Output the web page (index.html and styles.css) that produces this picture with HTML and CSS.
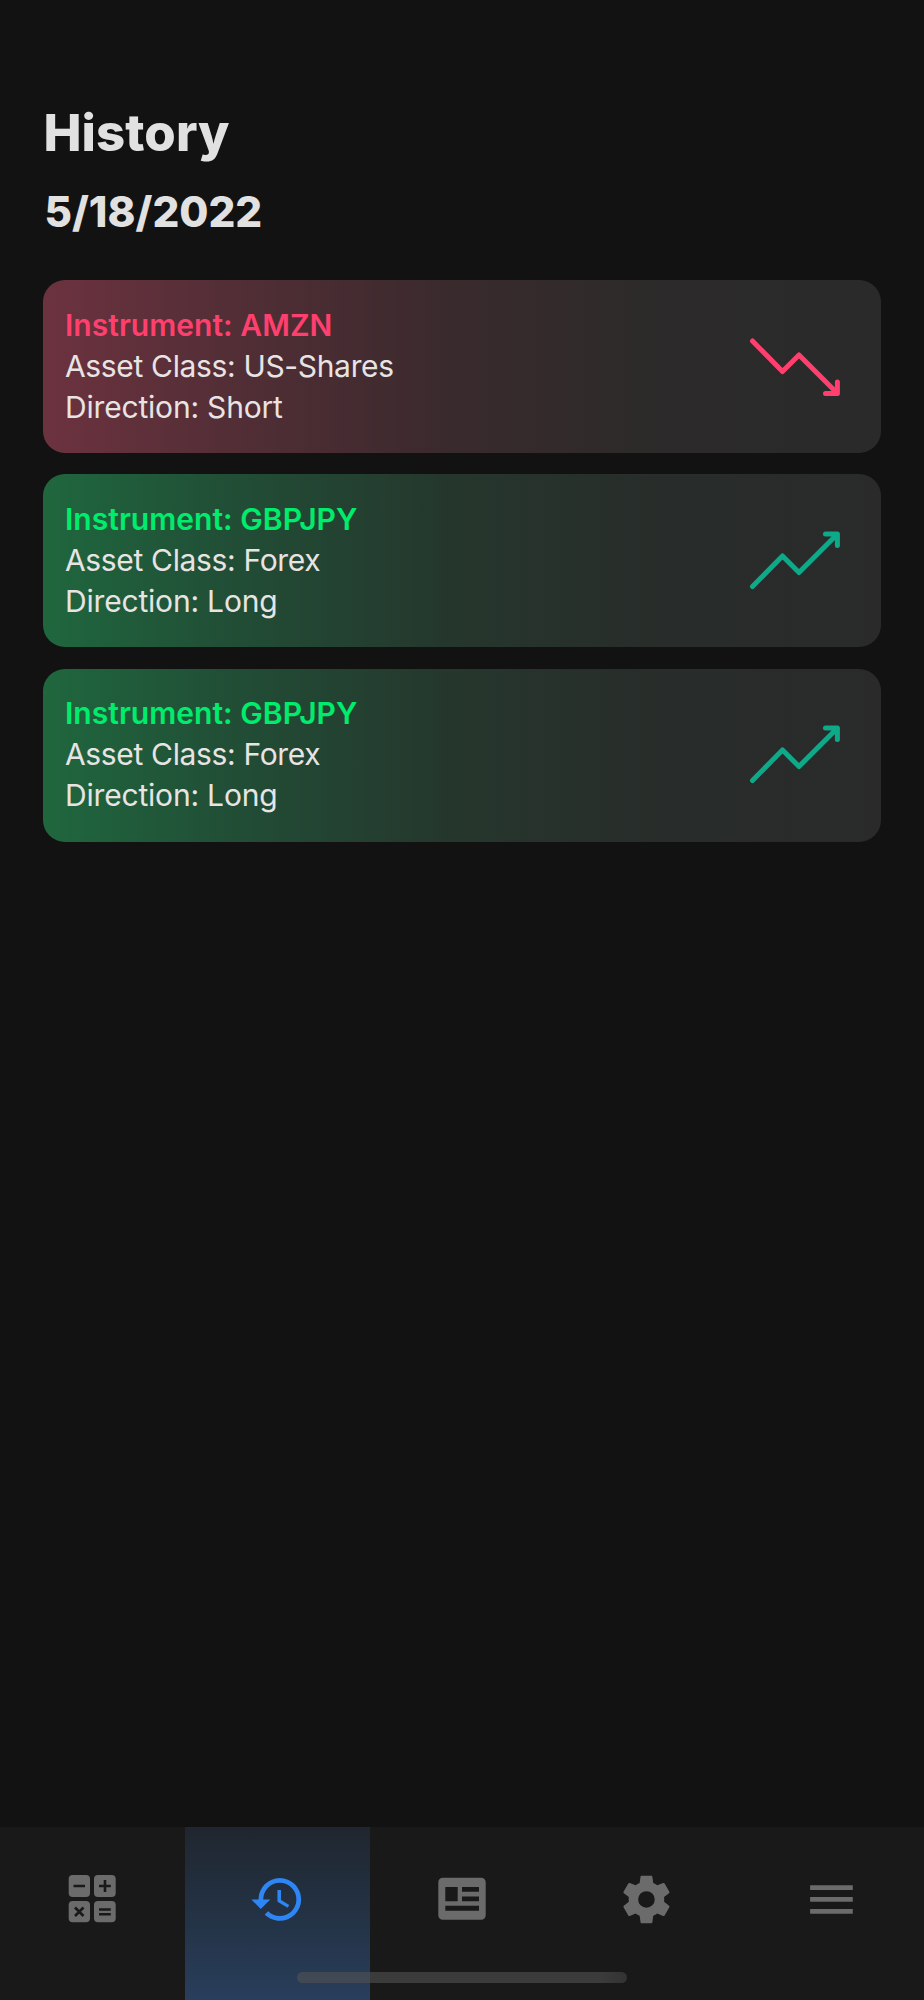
FILE: index.html
```html
<!DOCTYPE html>
<html lang="en">
<head>
<meta charset="utf-8">
<title>History</title>
<link rel="stylesheet" href="styles.css">
</head>
<body>
<div class="screen">
  <main class="content">
    <h1 class="title">History</h1>
    <h2 class="date">5/18/2022</h2>
    <section class="cards">
      <article class="card card-short">
        <div class="info">
          <p class="instrument">Instrument: AMZN</p>
          <p class="asset">Asset Class: US-Shares</p>
          <p class="direction">Direction: Short</p>
        </div>
        <svg class="trend" viewBox="0 0 96 64"><path d="M5.5 5 35.5 35.5 52 19 89 56M78.5 57.5H90.4V46"/></svg>
      </article>
      <article class="card card-long">
        <div class="info">
          <p class="instrument">Instrument: GBPJPY</p>
          <p class="asset">Asset Class: Forex</p>
          <p class="direction">Direction: Long</p>
        </div>
        <svg class="trend" viewBox="0 0 96 64"><path d="M5.5 56.5 35.5 26 52 42.500 89 5.5M78.5 4H90.4V15.5"/></svg>
      </article>
      <article class="card card-long">
        <div class="info">
          <p class="instrument">Instrument: GBPJPY</p>
          <p class="asset">Asset Class: Forex</p>
          <p class="direction">Direction: Long</p>
        </div>
        <svg class="trend" viewBox="0 0 96 64"><path d="M5.5 56.5 35.5 26 52 42.500 89 5.5M78.5 4H90.4V15.5"/></svg>
      </article>
    </section>
  </main>
  <nav class="tabs">
    <a class="tab">
      <svg class="custom" viewBox="0 0 64 64">
        <rect x="8.7" y="10" width="21.3" height="22" rx="4"/><rect x="34" y="10" width="21.7" height="22" rx="4"/>
        <rect x="8.7" y="36" width="21.3" height="21.3" rx="4"/><rect x="34" y="36" width="21.7" height="21.3" rx="4"/>
        <path class="marks" d="M13.5 21H25M39 21H50.8M45 15V27M15 42.5 23.5 51M23.5 42.5 15 51M39 44.5H50.8M39 49.2H50.8"/>
      </svg>
    </a>
    <a class="tab active">
      <svg class="icon" viewBox="0 0 24 24"><path d="M13.5 8H12V13L16.28 15.54 17 14.33 13.5 12.25V8M13 3A9 9 0 0 0 4 12H1L4.96 16.03 9 12H6A7 7 0 0 1 13 5 7 7 0 0 1 20 12 7 7 0 0 1 13 19C11.07 19 9.32 18.21 8.06 16.94L6.64 18.36C8.27 20 10.5 21 13 21A9 9 0 0 0 22 12 9 9 0 0 0 13 3"/></svg>
    </a>
    <a class="tab">
      <svg class="custom" viewBox="0 0 64 64"><path fill-rule="evenodd" d="M12.8 12.7H51.2A4.5 4.5 0 0 1 55.7 17.2V50.2A4.5 4.5 0 0 1 51.2 54.7H12.8A4.5 4.5 0 0 1 8.3 50.2V17.2A4.5 4.5 0 0 1 12.8 12.7ZM15.3 22V36.3H27.7V22ZM32 22V26.8H49V22ZM32 31.4V36.3H49V31.4ZM15.3 40.8V45.7H49V40.8Z"/></svg>
    </a>
    <a class="tab">
      <svg class="icon" viewBox="0 0 24 24"><path d="M12,15.5A3.5,3.5 0 0,1 8.5,12A3.5,3.5 0 0,1 12,8.5A3.5,3.5 0 0,1 15.5,12A3.5,3.5 0 0,1 12,15.5M19.43,12.97C19.47,12.65 19.5,12.33 19.5,12C19.5,11.67 19.47,11.34 19.43,11L21.54,9.37C21.73,9.22 21.78,8.95 21.66,8.73L19.66,5.27C19.54,5.05 19.27,4.96 19.05,5.05L16.56,6.05C16.04,5.66 15.5,5.32 14.87,5.07L14.5,2.42C14.46,2.18 14.25,2 14,2H10C9.75,2 9.54,2.18 9.5,2.42L9.13,5.07C8.5,5.32 7.96,5.66 7.44,6.05L4.95,5.05C4.73,4.96 4.46,5.05 4.34,5.27L2.34,8.73C2.21,8.95 2.27,9.22 2.46,9.37L4.57,11C4.53,11.34 4.5,11.67 4.5,12C4.5,12.33 4.53,12.65 4.57,12.97L2.46,14.63C2.27,14.78 2.21,15.05 2.34,15.27L4.34,18.73C4.46,18.95 4.73,19.03 4.95,18.95L7.44,17.94C7.96,18.34 8.5,18.68 9.13,18.93L9.5,21.58C9.54,21.82 9.75,22 10,22H14C14.25,22 14.46,21.82 14.5,21.58L14.87,18.93C15.5,18.67 16.04,18.34 16.56,17.94L19.05,18.95C19.27,19.03 19.54,18.95 19.66,18.73L21.66,15.27C21.78,15.05 21.73,14.78 21.54,14.63L19.43,12.97Z"/></svg>
    </a>
    <a class="tab">
      <svg class="icon" viewBox="0 0 24 24"><path d="M3 6H21V8H3ZM3 11H21V13H3ZM3 16H21V18H3Z"/></svg>
    </a>
    <div class="home-indicator"></div>
  </nav>
</div>
</body>
</html>
```
FILE: styles.css
```css
* { box-sizing: border-box; }
body { margin: 0; background: #121212; font-family: Inter, "Liberation Sans", sans-serif; }
h1, h2, p { margin: 0; white-space: nowrap; }
.screen { width: 924px; height: 2000px; display: flex; flex-direction: column; background: #121212; }
.content { flex: 1; padding: 103px 43px 0; color: #e1e1e1; }
.title { font-size: 50.8px; line-height: 60px; font-weight: 800; letter-spacing: .1px; margin-left: .5px; }
.date { font-size: 42.2px; line-height: 50px; font-weight: 800; margin-top: 24px; margin-left: 1.5px; }
.cards { display: flex; flex-direction: column; gap: 21.6px; margin-top: 43px; }
.card { display: flex; justify-content: space-between; align-items: flex-start; height: 172.8px; border-radius: 22px; padding: 24.5px 38px 0 22px; }
.card-short { background: linear-gradient(90deg, #6c323f 0%, #532e36 22%, #3a2a2d 48%, #2d2a2a 72%, #2a2a2a 100%); }
.card-long { background: linear-gradient(90deg, #1f673e 0%, #214e36 22%, #25372d 48%, #282d2a 72%, #2a2a2a 100%); }
.info { font-size: 30px; line-height: 41px; color: #e8e4e4; }
.instrument { font-weight: 600; letter-spacing: .04px; }
.asset { letter-spacing: -.34px; }
.direction { letter-spacing: -.19px; }
.card-short .instrument { color: #ff3f6d; }
.card-long .instrument { color: #00ec6c; }
.trend { width: 96px; height: 64px; margin-top: 31px; fill: none; stroke-width: 5; stroke-linecap: round; stroke-linejoin: round; }
.card-short .trend { stroke: #ff3f6d; }
.card-long .trend { stroke: #0caa88; }
.tabs { position: relative; display: grid; grid-template-columns: repeat(5, 1fr); height: 173px; background: #191919; }
.tab { display: flex; justify-content: center; align-items: flex-start; fill: #6b6b6b; }
.active { fill: #2e86f5; background: linear-gradient(#20262f, #233244 50%, #293e5c); }
.icon { width: 56.9px; height: 56.9px; margin-top: 43.5px; }
.custom { width: 64px; height: 64px; margin-top: 38px; }
.marks { fill: none; stroke: #191919; stroke-width: 2.6; }
.home-indicator { position: absolute; left: 297px; bottom: 17.5px; width: 330px; height: 11px; border-radius: 5.5px; background: linear-gradient(90deg, rgba(82, 82, 82, .6) 92%, rgba(68, 68, 68, .6)); }
```
